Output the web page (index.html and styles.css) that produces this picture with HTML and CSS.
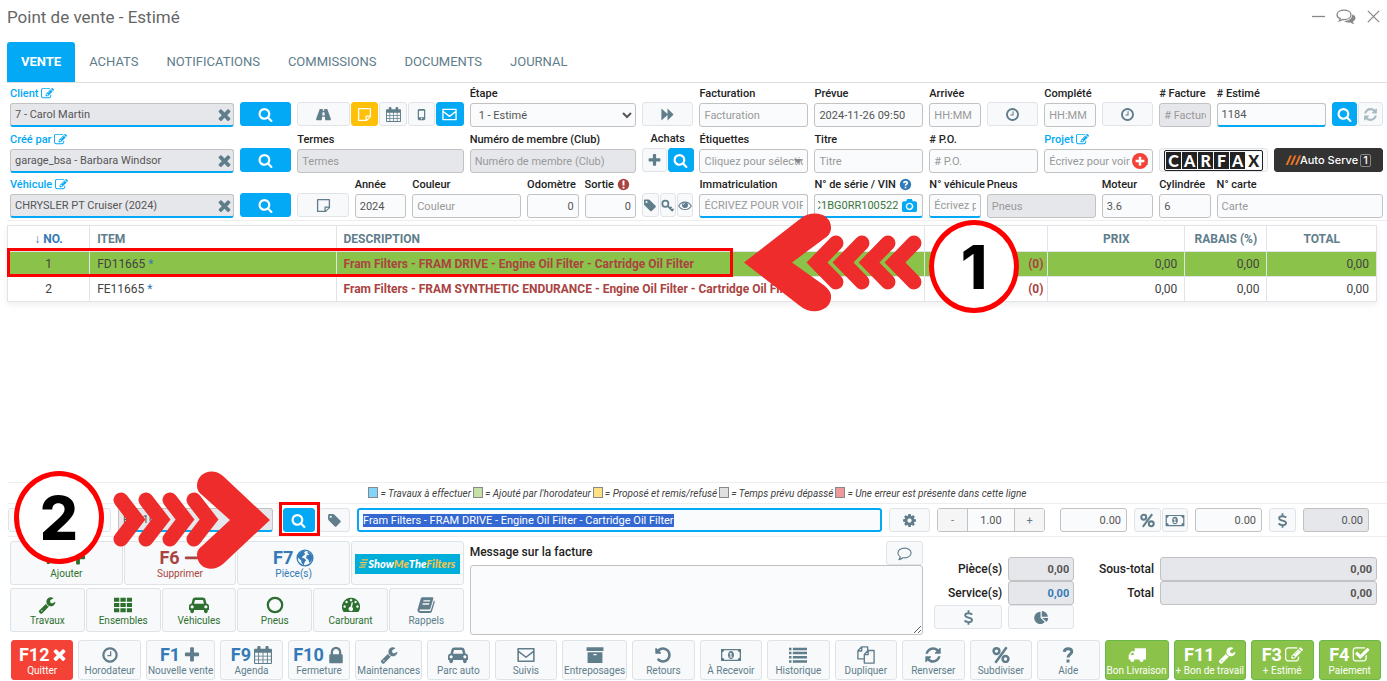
FILE: index.html
```html
<!DOCTYPE html>
<html lang="fr">
<head>
  <meta charset="UTF-8" />
  <meta name="viewport" content="width=device-width, initial-scale=1.0"/>
  <title>Point de vente - Estimé</title>
  <link rel="stylesheet" href="styles.css">
</head>
<body>
  <!-- Icon sprite -->
  <svg class="sprite" aria-hidden="true">
    <symbol id="search" viewBox="0 0 1792 1792"><path d="M1216 832q0-185-131.500-316.500t-316.500-131.500-316.500 131.500-131.500 316.500 131.500 316.500 316.500 131.500 316.500-131.500 131.500-316.500zm512 832q0 52-38 90t-90 38q-54 0-90-38l-343-342q-179 124-399 124-143 0-273.500-55.500t-225-150-150-225-55.500-273.500 55.500-273.500 150-225 225-150 273.500-55.500 273.500 55.500 225 150 150 225 55.500 273.500q0 220-124 399l343 343q37 37 37 90z"/></symbol>
    <symbol id="times" viewBox="240 240 1312 1312"><path d="M1490 1322q0 40-28 68l-136 136q-28 28-68 28t-68-28l-294-294-294 294q-28 28-68 28t-68-28l-136-136q-28-28-28-68t28-68l294-294-294-294q-28-28-28-68t28-68l136-136q28-28 68-28t68 28l294 294 294-294q28-28 68-28t68 28l136 136q28 28 28 68t-28 68l-294 294 294 294q28 28 28 68z"/></symbol>
    <symbol id="plus" viewBox="0 0 1792 1792"><path d="M1600 736v192q0 40-28 68t-68 28h-416v416q0 40-28 68t-68 28h-192q-40 0-68-28t-28-68v-416h-416q-40 0-68-28t-28-68v-192q0-40 28-68t68-28h416v-416q0-40 28-68t68-28h192q40 0 68 28t28 68v416h416q40 0 68 28t28 68z"/></symbol>
    <symbol id="minus" viewBox="0 0 1792 1792"><rect x="192" y="736" width="1408" height="288" rx="96"/></symbol>
    <symbol id="clock" viewBox="0 0 1792 1792"><path d="M1024 544v448q0 14-9 23t-23 9h-320q-14 0-23-9t-9-23v-64q0-14 9-23t23-9h224v-352q0-14 9-23t23-9h64q14 0 23 9t9 23zm416 352q0-148-73-273t-198-198-273-73-273 73-198 198-73 273 73 273 198 198 273 73 273-73 198-198 73-273zm224 0q0 209-103 385.500t-279.500 279.500-385.500 103-385.500-103-279.500-279.500-103-385.500 103-385.500 279.500-279.500 385.500-103 385.500 103 279.500 279.500 103 385.500z"/></symbol>
    <symbol id="wrench" viewBox="0 0 1792 1792"><path d="M448 1472q0-26-19-45t-45-19-45 19-19 45 19 45 45 19 45-19 19-45zm644-420l-682 682q-37 37-90 37-52 0-91-37l-106-108q-38-36-38-90 0-53 38-91l681-681q39 98 114.500 173.500t173.500 114.500zm634-435q0 39-23 106-47 134-164.500 217.500t-258.500 83.500q-185 0-316.500-131.500t-131.500-316.500 131.500-316.500 316.500-131.500q58 0 121.500 16.500t107.500 46.500q16 11 16 28t-16 28l-293 169v224l193 107q5-3 79-48.500t135.500-81 70.500-35.500q15 0 23.500 10t8.500 25z"/></symbol>
    <symbol id="car" viewBox="0 0 2048 1792"><path d="M480 1088q0-66-47-113t-113-47-113 47-47 113 47 113 113 47 113-47 47-113zm36-320h1016l-89-357q-2-8-14-17.500t-21-9.500h-768q-9 0-21 9.500t-14 17.500zm1372 320q0-66-47-113t-113-47-113 47-47 113 47 113 113 47 113-47 47-113zm160-96v384q0 14-9 23t-23 9h-96v128q0 80-56 136t-136 56-136-56-56-136v-128h-1024v128q0 80-56 136t-136 56-136-56-56-136v-128h-96q-14 0-23-9t-9-23v-384q0-93 65.500-158.500t158.500-65.500h28l105-419q23-94 104-157.500t179-63.500h768q98 0 179 63.500t104 157.500l105 419h28q93 0 158.500 65.500t65.500 158.500z"/></symbol>
    <symbol id="tag" viewBox="0 0 1792 1792"><path d="M576 448q0-53-37.500-90.500t-90.500-37.500-90.500 37.500-37.500 90.500 37.500 90.500 90.500 37.500 90.500-37.500 37.500-90.500zm1067 576q0 53-37 90l-491 492q-39 37-91 37-53 0-90-37l-715-716q-38-37-64.500-101t-26.500-117v-416q0-52 38-90t90-38h416q53 0 117 26.500t102 64.500l715 714q37 39 37 91z"/></symbol>
    <symbol id="lock" viewBox="128 64 1536 1536"><path d="M640 768h512v-192q0-106-75-181t-181-75-181 75-75 181v192zm832 96v576q0 40-28 68t-68 28h-960q-40 0-68-28t-28-68v-576q0-40 28-68t68-28h32v-192q0-184 132-316t316-132 316 132 132 316v192h32q40 0 68 28t28 68z"/></symbol>
    <symbol id="refresh" viewBox="0 0 1792 1792"><path d="M1639 1056q0 5-1 7-64 268-268 434.500t-478 166.500q-146 0-282.500-55t-243.500-157l-129 129q-19 19-45 19t-45-19-19-45v-448q0-26 19-45t45-19h448q26 0 45 19t19 45-19 45l-137 137q71 66 161 102t187 36q134 0 250-65t186-179q11-17 53-117 8-23 30-23h192q13 0 22.500 9.500t9.500 22.500zm25-800v448q0 26-19 45t-45 19h-448q-26 0-45-19t-19-45 19-45l138-138q-148-137-349-137-134 0-250 65t-186 179q-11 17-53 117-8 23-30 23h-199q-13 0-22.500-9.500t-9.500-22.500v-7q65-268 270-434.500t480-166.500q146 0 284 55.500t245 156.500l130-129q19-19 45-19t45 19 19 45z"/></symbol>
    <symbol id="undo" viewBox="0 0 1792 1792"><path d="M1664 896q0 156-61 298t-164 245-245 164-298 61q-172 0-327-72.500t-264-204.500q-7-10-6.500-22.500t8.500-20.500l137-138q10-9 25-9 16 2 23 12 73 95 179 147t225 52q104 0 198.500-40.500t163.500-109.500 109.500-163.500 40.500-198.500-40.500-198.500-109.500-163.500-163.500-109.500-198.500-40.500q-98 0-188 35.500t-160 101.500l137 138q31 30 14 69-17 40-59 40h-448q-26 0-45-19t-19-45v-448q0-42 40-59 39-17 69 14l130 129q107-101 244.500-156.500t284.500-55.500q156 0 298 61t245 164 164 245 61 298z"/></symbol>
    <symbol id="edit" viewBox="0 0 1792 1792"><path d="M888 1184l116-116-152-152-116 116v56h96v96h56zm440-720q-16-16-33 1l-350 350q-17 17-1 33t33-1l350-350q17-17 1-33zm80 594v190q0 119-84.500 203.500t-203.500 84.500h-832q-119 0-203.500-84.500t-84.500-203.500v-832q0-119 84.500-203.500t203.500-84.500h832q63 0 117 25 15 7 18 23 3 17-9 29l-49 49q-14 14-32 8-23-6-45-6h-832q-66 0-113 47t-47 113v832q0 66 47 113t113 47h832q66 0 113-47t47-113v-126q0-13 9-22l64-64q15-15 35-7t20 29zm-96-738l288 288-672 672h-288v-288zm444 132l-92 92-288-288 92-92q28-28 68-28t68 28l152 152q28 28 28 68t-28 68z"/></symbol>
    <symbol id="check" viewBox="0 0 1792 1792"><path d="M1472 930v318q0 119-84.500 203.500t-203.500 84.500h-832q-119 0-203.500-84.500t-84.500-203.500v-832q0-119 84.500-203.500t203.500-84.500h832q63 0 117 25 15 7 18 23 3 17-9 29l-49 49q-10 10-23 10-3 0-9-2-23-6-45-6h-832q-66 0-113 47t-47 113v832q0 66 47 113t113 47h832q66 0 113-47t47-113v-254q0-13 9-22l64-64q10-10 23-10 6 0 12 3 20 8 20 29zm231-489l-814 814q-24 24-57 24t-57-24l-430-430q-24-24-24-57t24-57l110-110q24-24 57-24t57 24l263 263 647-647q24-24 57-24t57 24l110 110q24 24 24 57t-24 57z"/></symbol>
    <symbol id="cog" viewBox="0 0 1792 1792"><path d="M1152 896q0-106-75-181t-181-75-181 75-75 181 75 181 181 75 181-75 75-181zm512-109v222q0 12-8 23t-20 13l-185 28q-19 54-39 91 35 50 107 138 10 12 10 25t-9 23q-27 37-99 108t-94 71q-12 0-26-9l-138-108q-44 23-91 38-16 136-29 186-7 28-36 28h-222q-14 0-24.500-8.500t-11.500-21.500l-28-184q-49-16-90-37l-141 107q-10 9-25 9-14 0-25-11-126-114-165-168-7-10-7-23 0-12 8-23 15-21 51-66.500t54-70.500q-27-50-41-99l-183-27q-13-2-21-12.500t-8-23.500v-222q0-12 8-23t19-13l186-28q14-46 39-92-40-57-107-138-10-12-10-24 0-10 9-23 26-36 98.500-107.500t94.500-71.500q13 0 26 10l138 107q44-23 91-38 16-136 29-186 7-28 36-28h222q14 0 24.500 8.500t11.500 21.500l28 184q49 16 90 37l142-107q9-9 24-9 13 0 25 10 129 119 165 170 7 8 7 22 0 12-8 23-15 21-51 66.500t-54 70.500q26 50 41 98l183 28q13 2 21 12.500t8 23.500z"/></symbol>
    <symbol id="road" viewBox="0 0 16 16"><path fill-rule="evenodd" d="M4 2h3.300l-.2 2h1.800l-.2-2H12l3.800 10.500c.2.800 0 1.500-.6 1.500H9.800l-.3-3.500h-3L6.200 14H.8c-.6 0-.8-.7-.6-1.500zM7 5.500L6.700 9h2.600L9 5.500z"/></symbol>
    <symbol id="note" viewBox="0 0 16 16"><path fill-rule="evenodd" d="M2 1h12a1 1 0 0 1 1 1v8.500L10.500 15H2a1 1 0 0 1-1-1V2a1 1 0 0 1 1-1zm.4 1.400v11.200H9V10a1 1 0 0 1 1-1h3.600V2.400zm8 8v3l3-3z"/></symbol>
    <symbol id="calendar" viewBox="0 0 16 16"><path fill-rule="evenodd" d="M1 2.500h2V1a1 1 0 0 1 1-1h.8a1 1 0 0 1 1 1v1.500h4.400V1a1 1 0 0 1 1-1h.8a1 1 0 0 1 1 1v1.500h2a1 1 0 0 1 1 1V15a1 1 0 0 1-1 1H1a1 1 0 0 1-1-1V3.500a1 1 0 0 1 1-1zM1 6v2.600h2.700V6zm3.500 0v2.600h3.100V6zm3.900 0v2.600h3.100V6zm3.900 0v2.600H15V6zM1 9.300V12h2.700V9.300zm3.500 0V12h3.100V9.300zm3.900 0V12h3.100V9.300zm3.900 0V12H15V9.300zM1 12.700V15h2.700v-2.300zm3.500 0V15h3.100v-2.300zm3.900 0V15h3.100v-2.300zm3.900 0V15H15v-2.300z"/></symbol>
    <symbol id="mobile" viewBox="0 0 16 16"><path fill-rule="evenodd" d="M5.500 2h5A1.500 1.500 0 0 1 12 3.500v9a1.500 1.500 0 0 1-1.500 1.500h-5A1.500 1.500 0 0 1 4 12.500v-9A1.500 1.500 0 0 1 5.500 2zm-.2 2v7h5.400V4zM8 11.800a.7.700 0 1 0 .1 0z"/></symbol>
    <symbol id="mail" viewBox="0 0 16 16"><path fill="none" stroke="currentColor" stroke-width="1.400" stroke-linejoin="round" d="M1 2.500h14v11H1zM1 4.500L8 10l7-5.500"/></symbol>
    <symbol id="forward" viewBox="0 0 16 16"><path d="M1.500 1.500L8 7.500v-6L14.500 8 8 14.500v-6l-6.500 6z"/></symbol>
    <symbol id="key" viewBox="0 0 16 16"><g fill="none" stroke="currentColor" stroke-width="2"><circle cx="5" cy="6" r="3.500"/><path d="M7.500 8.500l6 6M10 11.500l2-2M12.300 13.800l2-2"/></g></symbol>
    <symbol id="eye" viewBox="0 0 16 16"><path fill="none" stroke="currentColor" stroke-width="1.200" d="M.8 8.500C4.500 2.500 11.500 2.500 15.200 8.500 11.500 14 4.500 14 .8 8.500z"/><circle cx="8" cy="7.500" r="3.400"/><path fill="none" stroke="#fff" stroke-width=".8" d="M6 7.400a2 2 0 0 1 2-2"/></symbol>
    <symbol id="camera" viewBox="0 0 16 16"><path fill-rule="evenodd" d="M2 3.500h2.500L5.500 1h5l1 2.500H14a2 2 0 0 1 2 2V13a2 2 0 0 1-2 2H2a2 2 0 0 1-2-2V5.500a2 2 0 0 1 2-2zM8 5a4 4 0 1 0 .1 0zm0 1.500a2.500 2.500 0 1 1-.1 0z"/></symbol>
    <symbol id="grid" viewBox="0 0 16 16"><path d="M0 1.500h4.700v3.600H0zm5.700 0h4.700v3.600H5.700zm5.700 0H16v3.600h-4.600zM0 6.200h4.700v3.600H0zm5.700 0h4.700v3.600H5.700zm5.700 0H16v3.600h-4.600zM0 10.900h4.700v3.600H0zm5.700 0h4.700v3.600H5.700zm5.700 0H16v3.600h-4.600z"/></symbol>
    <symbol id="ring" viewBox="0 0 16 16"><circle cx="8" cy="8" r="6.400" fill="none" stroke="currentColor" stroke-width="2"/></symbol>
    <symbol id="globe" viewBox="0 0 16 16"><circle cx="8" cy="8" r="7" fill="none" stroke="currentColor" stroke-width="1.200"/><path d="M3 3.500L6 1.500 8.500 2 7 3.500l1.500 1L6.500 6 5 7.500l2.500 1L9 10l-1.500 2-.5 2.500L5 12.500 4.500 10 2 8 1.500 6zM10 2l3 2 1.800 3-1 3.500-1.800 2-1-3-2-1.500.5-2.500L12 5l-1.500-1z"/></symbol>
    <symbol id="gauge" viewBox="0 0 16 16"><path fill-rule="evenodd" d="M8 1.500a8 8 0 0 1 6.700 12.400.8.800 0 0 1-.7.400H2a.8.800 0 0 1-.7-.4A8 8 0 0 1 8 1.500zM8 2.600a1.100 1.100 0 1 0 .1 0zM4 4.200a1.100 1.100 0 1 0 .1 0zM2.300 8.300a1.100 1.100 0 1 0 .1 0zM12 4.200a1.100 1.100 0 1 0 .1 0zM13.700 8.300a1.100 1.100 0 1 0 .1 0zM8.600 5.500l-1 4a2 2 0 1 0 1.300.3l.9-4z"/></symbol>
    <symbol id="book" viewBox="0 0 16 16"><path fill-rule="evenodd" d="M5 1h8.500c.8 0 1.200.6 1 1.300L12 10.800c-.2.700-.8 1.200-1.500 1.200H2.800c-.8 0-.8 1.300.2 1.300h8.300c.5 0 .9-.3 1-.7L15 4c.7.300.9.900.7 1.600l-2.400 7.900c-.2.800-1 1.500-1.900 1.500H2.800C1.200 15 0 13.500.5 12L3.300 2.500C3.500 1.600 4.100 1 5 1zm.9 2.700L5.600 4.900h5.900l.3-1.200zM5.100 6.500l-.3 1.200h5.900l.3-1.200z"/></symbol>
    <symbol id="money" viewBox="0 0 20 16"><path fill-rule="evenodd" d="M0 2h20v12H0zm3.200 1.300c0 1-.9 1.900-1.900 1.900v5.600c1 0 1.900.9 1.900 1.900h13.600c0-1 .9-1.900 1.900-1.900V5.200c-1 0-1.900-.9-1.900-1.900z"/><path fill-rule="evenodd" d="M10 4c2 0 3 1.800 3 4s-1 4-3 4-3-1.800-3-4 1-4 3-4zm-.3 1.700L8.300 6.900l.6.700.5-.4v2.500h-.9v.9h2.900v-.9h-.9v-4z"/></symbol>
    <symbol id="list" viewBox="0 0 16 16"><path d="M0 1.500h2.200v2.200H0zm3.400 0H16v2.200H3.400zM0 5.200h2.200v2.200H0zm3.400 0H16v2.200H3.400zM0 8.900h2.200v2.200H0zm3.400 0H16v2.200H3.400zM0 12.600h2.200v2.200H0zm3.400 0H16v2.200H3.400z"/></symbol>
    <symbol id="archive" viewBox="0 0 16 16"><path fill-rule="evenodd" d="M.5 1h15v3.500H.5zm.9 4.500h13.200V15H1.400zM6.500 7v1.300h3V7z"/></symbol>
    <symbol id="copy" viewBox="0 0 16 16"><g fill="none" stroke="currentColor" stroke-width="1.200" stroke-linejoin="round"><path d="M6.500 11.500H.8V4.200L4 .8h5.500v3M4.200.8v3.600H.8"/><path d="M6.500 7.500L9.700 4h5.500v11.200H6.500zM9.900 4v3.600H6.500"/></g></symbol>
    <symbol id="truck" viewBox="0 0 16 16"><path d="M6 2h9.500c.3 0 .5.200.5.500V12H6z"/><path fill-rule="evenodd" d="M.6 12V8L3 4.700h3.200V12zM2 8h3V6H3.500z"/><circle cx="3.800" cy="12.500" r="1.800"/><circle cx="12" cy="12.500" r="1.800"/></symbol>
    <symbol id="comment" viewBox="0 0 16 16"><path fill="none" stroke="currentColor" stroke-width="1.200" stroke-linejoin="round" d="M8 2.200c4 0 7 2.300 7 5.200s-3 5.200-7 5.200l-1.700-.1C5 13.700 3.500 14.200 2 14.500c.9-.9 1.300-1.700 1.500-2.900C2 10.600 1 9.100 1 7.400c0-2.900 3-5.200 7-5.200z"/></symbol>
    <symbol id="comments" viewBox="0 0 20 16"><path fill="none" stroke="currentColor" stroke-width="1.300" d="M8 1.200c4 0 7 2 7 4.700s-3 4.700-7 4.700l-1.500-.1c-1 .8-2 1.200-3.300 1.400.8-.8 1-1.400 1-2.200C2.300 8.800 1 7.500 1 5.900c0-2.700 3-4.700 7-4.700z"/><path d="M16.300 5.200c2 .8 3.200 2.200 3.200 3.800s-1 2.700-2.500 3.500c0 1 .4 1.700 1.300 2.500-1.600-.2-2.800-.7-3.800-1.600-2.600.3-5-.3-6.300-1.500 4.700 0 8.400-2.700 8.100-6.700z"/></symbol>
    <symbol id="pie" viewBox="0 0 16 16"><path d="M7 2v6.300l4.500 4.600A6.500 6.500 0 1 1 7 2zM8.300 1a6.500 6.500 0 0 1 6.500 6.300H8.300zM9 8.600h6.200a6.500 6.500 0 0 1-1.900 4.300z"/></symbol>
    <symbol id="dollar" viewBox="0 0 16 16"><path fill="none" stroke="currentColor" stroke-width="2" d="M12 4.800C11 3.900 9.700 3.400 8 3.400c-2.200 0-3.600.8-3.600 2.200 0 3.400 7.400 1.500 7.400 5 0 1.500-1.500 2.300-3.700 2.300-1.800 0-3.200-.6-4.300-1.700M8 .3v3M8 12.900v2.900"/></symbol>
    <symbol id="percent" viewBox="0 0 16 16"><g fill="none" stroke="currentColor" stroke-width="2.200"><circle cx="4" cy="4.500" r="2.600"/><circle cx="12" cy="11.500" r="2.600"/><path d="M13 1.200L3 14.800"/></g></symbol>
    <symbol id="question" viewBox="0 0 16 16"><path fill="none" stroke="currentColor" stroke-width="2.700" d="M4.500 5.200C5 3.500 6.300 2.500 8 2.500c2 0 3.300 1.100 3.300 2.600C11.300 7.500 8 7.500 8 10.300M8 12v2.700"/></symbol>
    <symbol id="help" viewBox="0 0 16 16"><circle cx="8" cy="8" r="7"/><path fill="none" stroke="#fff" stroke-width="2" d="M5.700 6.300c.3-1.300 1.200-1.900 2.300-1.900 1.300 0 2.200.7 2.200 1.700C10.200 7.600 8 7.600 8 9.500M8 10.700v1.900"/></symbol>
    <symbol id="alert" viewBox="0 0 16 16"><circle cx="8" cy="8" r="7"/><path fill="none" stroke="#fff" stroke-width="2.400" d="M8 3v6.300M8 10.700V13"/></symbol>
  </svg>

  <div class="pos-window">
    <header class="title-bar">
      <h1>Point de vente - Estimé</h1>
      <div class="window-buttons">
        <button aria-label="Réduire"><svg class="icon" viewBox="0 0 16 16"><path class="thin" d="M1 8h14"/></svg></button>
        <button aria-label="Clavardage"><svg class="icon chat"><use href="#comments"/></svg></button>
        <button aria-label="Fermer"><svg class="icon" viewBox="0 0 16 16"><path class="thin" d="M2 2l12 12M14 2L2 14"/></svg></button>
      </div>
    </header>

    <nav class="tabs">
      <a href="#" class="active">VENTE</a>
      <a href="#">ACHATS</a>
      <a href="#">NOTIFICATIONS</a>
      <a href="#">COMMISSIONS</a>
      <a href="#">DOCUMENTS</a>
      <a href="#">JOURNAL</a>
    </nav>

    <main>
      <form class="form-grid">
        <!-- Client -->
        <div class="field span4">
          <label class="link-label" for="client">Client <svg class="icon small"><use href="#edit"/></svg></label>
          <div class="wrap"><input id="client" class="locked under" value="7 - Carol Martin" readonly><button type="button" class="clear" aria-label="Effacer"><svg class="icon"><use href="#times"/></svg></button></div>
        </div>
        <button type="button" class="btn blue" aria-label="Chercher client"><svg class="icon"><use href="#search"/></svg></button>
        <div class="group span3">
          <button type="button" class="btn wide" aria-label="Route"><svg class="icon"><use href="#road"/></svg></button>
          <button type="button" class="btn yellow" aria-label="Note"><svg class="icon"><use href="#note"/></svg></button>
          <button type="button" class="btn" aria-label="Calendrier"><svg class="icon"><use href="#calendar"/></svg></button>
          <button type="button" class="btn" aria-label="Mobile"><svg class="icon"><use href="#mobile"/></svg></button>
          <button type="button" class="btn blue" aria-label="Courriel"><svg class="icon"><use href="#mail"/></svg></button>
        </div>
        <div class="field span3">
          <label for="etape">Étape</label>
          <select id="etape"><option>1 - Estimé</option></select>
        </div>
        <button type="button" class="btn" aria-label="Étape suivante"><svg class="icon"><use href="#forward"/></svg></button>
        <div class="field span2"><label for="facturation">Facturation</label><input id="facturation" placeholder="Facturation"></div>
        <div class="field span2"><label for="prevue">Prévue</label><input id="prevue" value="2024-11-26 09:50"></div>
        <div class="field"><label for="arrivee">Arrivée</label><input id="arrivee" placeholder="HH:MM"></div>
        <button type="button" class="btn" aria-label="Heure d'arrivée"><svg class="icon"><use href="#clock"/></svg></button>
        <div class="field"><label for="complete">Complété</label><input id="complete" placeholder="HH:MM"></div>
        <button type="button" class="btn" aria-label="Heure complété"><svg class="icon"><use href="#clock"/></svg></button>
        <div class="field"><label for="facture"># Facture</label><input id="facture" class="locked" placeholder="# Facture" readonly></div>
        <div class="field span2"><label for="estime"># Estimé</label><input id="estime" class="under" value="1184"></div>
        <div class="group">
          <button type="button" class="btn blue" aria-label="Chercher estimé"><svg class="icon"><use href="#search"/></svg></button>
          <button type="button" class="btn faded" aria-label="Rafraîchir"><svg class="icon"><use href="#refresh"/></svg></button>
        </div>

        <!-- Créé par -->
        <div class="field span4">
          <label class="link-label" for="cree">Créé par <svg class="icon small"><use href="#edit"/></svg></label>
          <div class="wrap"><input id="cree" class="locked under" value="garage_bsa - Barbara Windsor" readonly><button type="button" class="clear" aria-label="Effacer"><svg class="icon"><use href="#times"/></svg></button></div>
        </div>
        <button type="button" class="btn blue" aria-label="Chercher employé"><svg class="icon"><use href="#search"/></svg></button>
        <div class="field span3"><label for="termes">Termes</label><input id="termes" class="locked" placeholder="Termes" readonly></div>
        <div class="field span3"><label for="membre">Numéro de membre (Club)</label><input id="membre" class="locked" placeholder="Numéro de membre (Club)" readonly></div>
        <div class="field">
          <span class="label center">Achats</span>
          <div class="group">
            <button type="button" class="btn" aria-label="Ajouter achat"><svg class="icon"><use href="#plus"/></svg></button>
            <button type="button" class="btn blue" aria-label="Chercher achat"><svg class="icon"><use href="#search"/></svg></button>
          </div>
        </div>
        <div class="field span2"><label for="etiquettes">Étiquettes</label><div class="wrap"><input id="etiquettes" class="combo" placeholder="Cliquez pour sélectionner"><span class="caret"></span></div></div>
        <div class="field span2"><label for="titre">Titre</label><input id="titre" placeholder="Titre"></div>
        <div class="field span2"><label for="po"># P.O.</label><input id="po" placeholder="# P.O."></div>
        <div class="field span2">
          <label class="link-label" for="projet">Projet <svg class="icon small"><use href="#edit"/></svg></label>
          <div class="wrap"><input id="projet" placeholder="Écrivez pour voir des choix"><button type="button" class="add-badge" aria-label="Ajouter projet"><svg class="icon" viewBox="0 0 16 16"><path d="M6 1h4v5h5v4h-5v5H6v-5H1V6h5z"/></svg></button></div>
        </div>
        <button type="button" class="btn carfax span2" aria-label="CARFAX"><span class="carfax-logo"><b>C</b><b>A</b><b>R</b><b>F</b><b>A</b><b class="last">X</b></span></button>
        <button type="button" class="btn autoserve span2"><span class="slashes">///</span>Auto Serve<span class="one">1</span></button>

        <!-- Véhicule -->
        <div class="field span4">
          <label class="link-label" for="vehicule">Véhicule <svg class="icon small"><use href="#edit"/></svg></label>
          <div class="wrap"><input id="vehicule" class="locked under" value="CHRYSLER PT Cruiser (2024)" readonly><button type="button" class="clear" aria-label="Effacer"><svg class="icon"><use href="#times"/></svg></button></div>
        </div>
        <button type="button" class="btn blue" aria-label="Chercher véhicule"><svg class="icon"><use href="#search"/></svg></button>
        <button type="button" class="btn" aria-label="Note du véhicule"><svg class="icon"><use href="#note"/></svg></button>
        <div class="field"><label for="annee">Année</label><input id="annee" value="2024"></div>
        <div class="field span2"><label for="couleur">Couleur</label><input id="couleur" placeholder="Couleur"></div>
        <div class="field"><label for="odometre">Odomètre</label><input id="odometre" class="right" value="0"></div>
        <div class="field"><label for="sortie">Sortie <svg class="icon small red"><use href="#alert"/></svg></label><input id="sortie" class="right" value="0"></div>
        <div class="group tight">
          <button type="button" class="btn" aria-label="Étiquette"><svg class="icon"><use href="#tag"/></svg></button>
          <button type="button" class="btn" aria-label="Clé"><svg class="icon"><use href="#key"/></svg></button>
          <button type="button" class="btn" aria-label="Voir"><svg class="icon"><use href="#eye"/></svg></button>
        </div>
        <div class="field span2"><label for="immat">Immatriculation</label><input id="immat" class="under" placeholder="ÉCRIVEZ POUR VOIR DES CHOIX"></div>
        <div class="field span2">
          <label for="vin">N° de série / VIN <svg class="icon small navy"><use href="#help"/></svg></label>
          <div class="wrap vin under"><input id="vin" value="2C3CDXRC1BG0RR100522"><button type="button" class="camera" aria-label="Photo"><svg class="icon"><use href="#camera"/></svg></button></div>
        </div>
        <div class="field"><label for="noveh">N° véhicule</label><input id="noveh" class="under" placeholder="Écrivez pour voir"></div>
        <div class="field span2"><label for="pneus">Pneus</label><input id="pneus" class="locked" placeholder="Pneus" readonly></div>
        <div class="field"><label for="moteur">Moteur</label><input id="moteur" value="3.6"></div>
        <div class="field"><label for="cyl">Cylindrée</label><input id="cyl" value="6"></div>
        <div class="field span3"><label for="carte">N° carte</label><input id="carte" placeholder="Carte"></div>
      </form>

      <section class="items">
        <table>
          <colgroup><col class="c-no"><col class="c-item"><col class="c-desc"><col class="c-qty"><col class="c-price"><col class="c-disc"><col class="c-total"></colgroup>
          <thead>
            <tr><th class="center sorted"><span class="sort">↓</span> NO.</th><th>ITEM</th><th>DESCRIPTION</th><th class="center">QTÉ</th><th class="center">PRIX</th><th class="center">RABAIS (%)</th><th class="center">TOTAL</th></tr>
          </thead>
          <tbody>
            <tr class="selected"><td class="center">1</td><td>FD11665 <span class="star">*</span></td><td class="warn">Fram Filters - FRAM DRIVE - Engine Oil Filter - Cartridge Oil Filter</td><td class="warn qty">(0)</td><td class="num">0,00</td><td class="num">0,00</td><td class="num">0,00</td></tr>
            <tr><td class="center">2</td><td>FE11665 <span class="star">*</span></td><td class="warn">Fram Filters - FRAM SYNTHETIC ENDURANCE - Engine Oil Filter - Cartridge Oil Filter</td><td class="warn qty">(0)</td><td class="num">0,00</td><td class="num">0,00</td><td class="num">0,00</td></tr>
          </tbody>
        </table>
      </section>

      <div class="legend">
        <span><i class="sw sky"></i>= Travaux à effectuer</span>
        <span><i class="sw lime"></i>= Ajouté par l'horodateur</span>
        <span><i class="sw gold"></i>= Proposé et remis/refusé</span>
        <span><i class="sw grey"></i>= Temps prévu dépassé</span>
        <span><i class="sw rose"></i>= Une erreur est présente dans cette ligne</span>
      </div>

      <div class="edit-row">
        <button class="btn" aria-label="Type"></button>
        <input class="locked under" aria-label="Item" value="FD11665" readonly>
        <div class="group lookup">
          <button class="btn blue" aria-label="Chercher item"><svg class="icon"><use href="#search"/></svg></button>
          <button class="btn" aria-label="Étiquette"><svg class="icon"><use href="#tag"/></svg></button>
        </div>
        <input id="description" class="focused" aria-label="Description" value="Fram Filters - FRAM DRIVE - Engine Oil Filter - Cartridge Oil Filter">
        <button class="btn" aria-label="Options"><svg class="icon"><use href="#cog"/></svg></button>
        <div class="stepper"><button>-</button><input aria-label="Quantité" value="1.00"><button>+</button></div>
        <input class="right" aria-label="Prix" value="0.00">
        <div class="group">
          <button class="btn" aria-label="Pourcentage"><svg class="icon"><use href="#percent"/></svg></button>
          <button class="btn" aria-label="Montant"><svg class="icon bill"><use href="#money"/></svg></button>
        </div>
        <input class="right" aria-label="Rabais" value="0.00">
        <button class="btn" aria-label="Dollar"><svg class="icon"><use href="#dollar"/></svg></button>
        <input class="right locked" aria-label="Total de ligne" value="0.00" readonly>
      </div>

      <section class="bottom">
        <div class="tools">
          <div class="tool-row">
            <button class="tool green"><span class="key">F5 <svg class="icon"><use href="#plus"/></svg></span>Ajouter</button>
            <button class="tool maroon"><span class="key">F6 <svg class="icon"><use href="#minus"/></svg></span>Supprimer</button>
            <button class="tool navy"><span class="key">F7 <svg class="icon"><use href="#globe"/></svg></span>Pièce(s)</button>
            <button class="tool filters"><span class="filters-logo"><svg class="speed" viewBox="0 0 10 10"><path d="M3 1h7M1 4h8M2 6.500h6M0 9h7"/></svg>Show<em>Me</em>The<em>Filters</em></span></button>
          </div>
          <div class="tool-row">
            <button class="tool green"><svg class="icon"><use href="#wrench"/></svg>Travaux</button>
            <button class="tool green"><svg class="icon"><use href="#grid"/></svg>Ensembles</button>
            <button class="tool green"><svg class="icon car"><use href="#car"/></svg>Véhicules</button>
            <button class="tool green"><svg class="icon"><use href="#ring"/></svg>Pneus</button>
            <button class="tool green"><svg class="icon"><use href="#gauge"/></svg>Carburant</button>
            <button class="tool"><svg class="icon"><use href="#book"/></svg>Rappels</button>
          </div>
        </div>

        <div class="message">
          <div class="message-head">
            <label for="message">Message sur la facture</label>
            <button class="btn" aria-label="Commentaire"><svg class="icon"><use href="#comment"/></svg></button>
          </div>
          <textarea id="message"></textarea>
        </div>

        <div class="totals">
          <label for="pieces">Pièce(s)</label><input id="pieces" class="locked" value="0,00" readonly>
          <label for="soustotal">Sous-total</label><input id="soustotal" class="locked" value="0,00" readonly>
          <label for="services">Service(s)</label><input id="services" class="locked navy" value="0,00" readonly>
          <label for="total">Total</label><input id="total" class="locked" value="0,00" readonly>
          <button class="btn" aria-label="Prix"><svg class="icon"><use href="#dollar"/></svg></button>
          <button class="btn" aria-label="Profit"><svg class="icon"><use href="#pie"/></svg></button>
        </div>
      </section>
    </main>

    <footer class="actions">
      <button class="action danger"><span class="key">F12 <svg class="icon cross"><use href="#times"/></svg></span>Quitter</button>
      <button class="action"><svg class="icon"><use href="#clock"/></svg>Horodateur</button>
      <button class="action"><span class="key">F1 <svg class="icon"><use href="#plus"/></svg></span>Nouvelle vente</button>
      <button class="action"><span class="key">F9 <svg class="icon"><use href="#calendar"/></svg></span>Agenda</button>
      <button class="action"><span class="key">F10 <svg class="icon lock"><use href="#lock"/></svg></span>Fermeture</button>
      <button class="action"><svg class="icon"><use href="#wrench"/></svg>Maintenances</button>
      <button class="action"><svg class="icon car"><use href="#car"/></svg>Parc auto</button>
      <button class="action"><svg class="icon"><use href="#mail"/></svg>Suivis</button>
      <button class="action"><svg class="icon"><use href="#archive"/></svg>Entreposages</button>
      <button class="action"><svg class="icon"><use href="#undo"/></svg>Retours</button>
      <button class="action"><svg class="icon bill"><use href="#money"/></svg>À Recevoir</button>
      <button class="action"><svg class="icon"><use href="#list"/></svg>Historique</button>
      <button class="action"><svg class="icon"><use href="#copy"/></svg>Dupliquer</button>
      <button class="action"><svg class="icon"><use href="#refresh"/></svg>Renverser</button>
      <button class="action"><svg class="icon"><use href="#percent"/></svg>Subdiviser</button>
      <button class="action"><svg class="icon"><use href="#question"/></svg>Aide</button>
      <button class="action success"><svg class="icon"><use href="#truck"/></svg>Bon Livraison</button>
      <button class="action success"><span class="key">F11 <svg class="icon"><use href="#wrench"/></svg></span>+ Bon de travail</button>
      <button class="action success"><span class="key">F3 <svg class="icon"><use href="#edit"/></svg></span>+ Estimé</button>
      <button class="action success"><span class="key">F4 <svg class="icon"><use href="#check"/></svg></span>Paiement</button>
    </footer>
  </div>

  <!-- Step markers drawn over the window -->
  <div class="frame row-frame"></div>
  <svg class="arrow arrow-1" viewBox="744 212 180 102" aria-hidden="true">
    <g class="chevrons">
      <path d="M836 243l-19 19.500 19 19.500M862 243l-19 19.500 19 19.500M888 243l-19 19.500 19 19.500M914 243l-19 19.500 19 19.500"/>
    </g>
    <path d="M744 262.500L800 219C812 209 832 213 831 229 830 234 828 236 825 238L792 262.500 825 286C828 289 831 292 831 296 832 311 812 316 800 306z"/>
  </svg>
  <div class="step step-1">1</div>
  <div class="frame button-frame"></div>
  <svg class="arrow arrow-2" viewBox="110 469 164 102" aria-hidden="true">
    <g class="chevrons">
      <path d="M121 500l15 19.500-15 19.500M146 500l15 19.500-15 19.500M170 500l15 19.500-15 19.500M194 500l15 19.500-15 19.500"/>
    </g>
    <path d="M270 520L223 476C213 467 197 472 197 486 197 490 199 493 202 495L230 520 202 546C199 548 197 551 197 554 197 569 213 573 223 564z"/>
  </svg>
  <div class="step step-2">2</div>

  <script>
    // the description is ready to be replaced when the line opens
    const description = document.getElementById("description");
    description.focus();
    description.select();
  </script>
</body>
</html>
```
FILE: styles.css
```css
* {
  box-sizing: border-box;
}
body {
  margin: 0;
  position: relative;
  font-family: Roboto, "Liberation Sans", sans-serif;
  font-size: 12px;
  color: #424242;
  background-color: white;
}
button, input, select, textarea {
  font-family: inherit;
  font-size: 11px;
  margin: 0;
}
button {
  cursor: pointer;
}
.sprite {
  display: none;
}
.icon {
  width: 15px;
  height: 15px;
  fill: currentColor;
  flex: none;
}
.icon.small {
  width: 13px;
  height: 13px;
  vertical-align: -3px;
}
.icon.car, .icon.bill {
  width: 20px;
}
.pos-window {
  min-height: 100vh;
  display: flex;
  flex-direction: column;
}

/* title and tabs */
.title-bar {
  display: flex;
  justify-content: space-between;
  align-items: center;
  height: 34px;
  margin-bottom: 8px;
  padding: 0 6px 0 7px;
}
.title-bar h1 {
  margin: 0;
  font-size: 17px;
  font-weight: normal;
  color: #666;
}
.window-buttons {
  display: flex;
  gap: 10px;
}
.window-buttons button {
  display: flex;
  padding: 0;
  border: none;
  background: none;
  color: #888;
}
.window-buttons .chat {
  width: 20px;
  height: 16px;
}
.thin {
  fill: none;
  stroke: currentColor;
  stroke-width: 1.400;
}
.tabs {
  display: flex;
  margin-left: 7px;
  border-bottom: 1px solid #ddd;
}
.tabs a {
  padding: 0 14px;
  line-height: 40px;
  font-size: 13px;
  color: #607d8b;
  text-decoration: none;
}
.tabs a.active {
  background-color: #03a9f4;
  color: white;
  font-weight: 700;
  border-radius: 3px 3px 0 0;
}

/* form */
main {
  display: flex;
  flex-direction: column;
  flex-grow: 1;
}
.form-grid {
  display: grid;
  grid-template-columns: repeat(24, minmax(0, 1fr));
  gap: 3px 6px;
  align-items: end;
  padding: 2px 4px 2px 10px;
}
.span2 {
  grid-column: span 2;
}
.span3 {
  grid-column: span 3;
}
.span4 {
  grid-column: span 4;
}
label, .label {
  display: block;
  height: 18px;
  line-height: 18px;
  font-size: 11px;
  font-weight: 500;
  color: #222;
  white-space: nowrap;
}
.link-label {
  color: #03a9f4;
}
input, select, textarea {
  display: block;
  width: 100%;
  height: 24px;
  padding: 0 4px;
  border: 1px solid #c2c2c2;
  border-radius: 3px;
  background-color: #fafbfc;
  color: #555;
}
input::placeholder {
  color: #999;
  opacity: 1;
}
.locked {
  background-color: #e6e7eb;
}
.under {
  border-bottom: 2px solid #03a9f4;
}
.right {
  text-align: right;
}
.center {
  text-align: center;
}
.navy {
  color: #337ab7;
}
.red {
  color: #a94442;
}
.wrap {
  position: relative;
}
.clear {
  position: absolute;
  top: 5px;
  right: 3px;
  display: flex;
  padding: 0;
  border: none;
  background: none;
  color: #607d8b;
}
.clear .icon {
  width: 13px;
  height: 13px;
}
.btn {
  display: flex;
  justify-content: center;
  align-items: center;
  height: 24px;
  margin-bottom: 1px;
  padding: 0;
  border: 1px solid #e0e4e8;
  border-radius: 3px;
  background-color: #f7f9fa;
  color: #607d8b;
}
.btn.blue {
  background-color: #03a9f4;
  border-color: #03a9f4;
  color: white;
}
.btn.yellow {
  background-color: #ffc107;
  border-color: #ffc107;
  color: white;
}
.faded .icon {
  opacity: 0.5;
}
.group {
  display: flex;
  gap: 1px;
}
.group .btn {
  flex: 1 1 0;
  min-width: 0;
}
.group .btn.wide {
  flex-grow: 2;
}
.tight .icon {
  width: 14px;
}
.caret {
  position: absolute;
  top: 10px;
  right: 6px;
  border: 4px solid transparent;
  border-top: 5px solid #888;
}
.add-badge {
  position: absolute;
  top: 4px;
  right: 5px;
  display: flex;
  justify-content: center;
  align-items: center;
  width: 16px;
  height: 16px;
  padding: 0;
  border: none;
  border-radius: 50%;
  background-color: #f44336;
  color: white;
}
.add-badge .icon {
  width: 10px;
  height: 10px;
}
.vin {
  overflow: hidden;
  display: flex;
  height: 24px;
  border: 1px solid #c2c2c2;
  border-bottom: 2px solid #03a9f4;
  border-radius: 3px;
  background-color: #fafbfc;
}
.vin input {
  direction: rtl;
  height: 21px;
  margin-left: 3px;
  padding: 0;
  border: none;
  color: #3c763d;
}
.camera {
  flex: none;
  display: flex;
  align-items: center;
  padding: 0 5px 0 4px;
  border: none;
  background: none;
  color: #03a9f4;
}
.carfax-logo {
  display: flex;
  padding: 1px;
  border: 1px solid #222;
  border-radius: 2px;
  gap: 1px;
}
.carfax-logo b {
  width: 15px;
  font-family: Lato, sans-serif;
  font-size: 16px;
  font-weight: 900;
  line-height: 17px;
  text-align: center;
  background-color: #222;
  color: white;
}
.carfax-logo .last {
  background-color: white;
  color: #222;
}
.btn.autoserve {
  border-color: #333;
  background-color: #333;
  color: white;
  font-family: Inter, sans-serif;
  font-size: 11px;
  font-weight: 500;
}
.slashes {
  color: #f57c1f;
  font-weight: 900;
  font-style: italic;
}
.one {
  margin-left: 2px;
  padding: 0 2px;
  border: 1px solid #888;
  border-radius: 2px;
  line-height: 11px;
}

/* items */
.items {
  flex-grow: 1;
  margin-left: 7px;
  padding: 4px 10px 0 0;
  border-top: 1px solid #eee;
}
table {
  width: 100%;
  table-layout: fixed;
  border-collapse: collapse;
  box-shadow: 0 3px 6px #f0f0f0;
}
.c-no { width: 6%; }
.c-item { width: 18%; }
.c-desc { width: 43%; }
.c-qty { width: 9%; }
.c-price { width: 10%; }
.c-disc { width: 6%; }
.c-total { width: 8%; }
th, td {
  height: 25px;
  padding: 0 7px;
  border: 1px solid #e0e4e8;
  text-align: left;
  white-space: nowrap;
}
th {
  height: 26px;
  color: #607d8b;
  font-weight: 700;
}
th.center, td.center {
  text-align: center;
}
.sorted, .star {
  color: #337ab7;
}
.sort {
  font-weight: normal;
}
.selected {
  background-color: #8bc34a;
}
.warn {
  color: #a94442;
  font-weight: 700;
}
.num {
  text-align: right;
}
.qty {
  padding-right: 4px;
  text-align: right;
}

/* legend */
.legend {
  display: flex;
  justify-content: center;
  gap: 2px;
  margin-left: 8px;
  padding: 2px 0 0;
  border: solid #eee;
  border-width: 1px 0;
  font-size: 10px;
  font-style: italic;
  line-height: 18px;
}
.sw {
  display: inline-block;
  width: 10px;
  height: 11px;
  margin-right: 2px;
  border: 1px solid #888;
  vertical-align: -1px;
}
.sky { background-color: #81d4fa; }
.lime { background-color: #c5e1a5; }
.gold { background-color: #ffe082; }
.grey { background-color: #e0e0e0; }
.rose { background-color: #ef9a9a; }

/* line being edited */
.edit-row {
  display: grid;
  grid-template-columns: 103px 155px 70px 1fr 41px 116px 67px 54px 67px 27px 66px;
  column-gap: 7px;
  margin-left: 8px;
  padding: 4px 18px 4px 0;
  border-bottom: 1px solid #eee;
}
.edit-row .btn {
  margin-bottom: 0;
}
.edit-row .right {
  padding-right: 5px;
}
.lookup {
  gap: 4px;
  padding-left: 3px;
}
.focused {
  border: 2px solid #03a9f4;
  outline: none;
}
.focused::selection {
  background-color: #3367d1;
  color: white;
}
.stepper {
  display: flex;
  width: 108px;
  height: 24px;
  border: 1px solid #c2c2c2;
  border-radius: 3px;
  overflow: hidden;
}
.stepper button {
  width: 29px;
  padding: 0;
  border: none;
  background-color: #f5f5f5;
  color: #607d8b;
}
.stepper input {
  flex: 1;
  min-width: 0;
  height: 22px;
  border-width: 0 1px;
  border-radius: 0;
  text-align: center;
}

/* bottom */
.bottom {
  display: grid;
  grid-template-columns: 454fr 454fr 448fr;
  gap: 6px;
  padding: 4px 10px 5px 10px;
}
.tools {
  display: flex;
  flex-direction: column;
  gap: 3px;
}
.tool-row {
  display: flex;
  gap: 1px;
}
.tool, .action {
  display: flex;
  flex-direction: column;
  justify-content: center;
  align-items: center;
  gap: 1px;
  border: 1px solid #dde3e7;
  border-radius: 3px;
  background-color: #f7f9fa;
  color: #607d8b;
  font-size: 10px;
  white-space: nowrap;
}
.tool {
  flex: 1 1 0;
  min-width: 0;
  height: 44px;
  padding: 1px 0 0;
}
.tool .icon, .action .icon {
  height: 18px;
  width: 18px;
}
.tool .icon.car, .action .icon.car, .action .icon.bill {
  width: 20px;
}
.key {
  display: flex;
  align-items: center;
  gap: 3px;
  font-size: 18px;
  font-weight: 700;
  line-height: 18px;
}
.green {
  color: #2d702f;
}
.maroon {
  color: #a94442;
}
.tool.navy {
  color: #337ab7;
}
.filters-logo {
  display: flex;
  align-items: center;
  justify-content: center;
  align-self: stretch;
  height: 20px;
  margin: 0 3px;
  background-color: #00aeda;
  color: white;
  font-family: Lato, sans-serif;
  font-size: 11px;
  font-style: italic;
  font-weight: 900;
}
.filters-logo em {
  color: #f5c24b;
}
.speed {
  width: 9px;
  height: 9px;
  stroke: #f5c24b;
  stroke-width: 1.500;
}
.message {
  display: flex;
  flex-direction: column;
}
.message-head {
  display: flex;
  justify-content: space-between;
  align-items: center;
}
.message-head label {
  font-size: 12px;
  height: 20px;
}
.message-head .btn {
  width: 37px;
  margin: 0;
}
textarea {
  flex-grow: 1;
  height: 70px;
  resize: vertical;
}
.totals {
  display: grid;
  grid-template-columns: 68fr 66fr 74fr 217fr;
  grid-auto-rows: 24px;
  column-gap: 6px;
  align-content: start;
  padding: 16px 0 0 5px;
}
.totals label {
  font-size: 12px;
  line-height: 24px;
  text-align: right;
}
.totals input {
  font-weight: 700;
  text-align: right;
}

/* actions */
.actions {
  display: flex;
  gap: 5px;
  padding: 0 6px 1px 11px;
}
.action {
  flex: 1 0 0;
  height: 40px;
  padding: 1px 1px 0;
}
.action .key {
  color: #337ab7;
}
.key .icon {
  color: #607d8b;
}
.tool .key .icon, .danger .key .icon, .success .key .icon {
  color: inherit;
}
.danger {
  border-color: #f44336;
  background-color: #f44336;
}
.success {
  border-color: #6bb84a;
  background-color: #8bc34a;
}
.danger, .success, .danger .key, .success .key {
  color: white;
}
.action .icon.cross {
  width: 13px;
  height: 13px;
}

/* step markers */
.frame {
  position: absolute;
  border: 3px solid red;
  pointer-events: none;
}
.row-frame {
  left: 7px;
  top: 248px;
  width: 726px;
  height: 29px;
}
.button-frame {
  left: 279px;
  top: 502px;
  width: 41px;
  height: 34px;
}
.arrow {
  position: absolute;
  fill: #ee2c2c;
  pointer-events: none;
}
.chevrons {
  fill: none;
  stroke: #ee2c2c;
  stroke-width: 15;
  stroke-linecap: round;
}
.arrow-1 {
  left: 744px;
  top: 212px;
  width: 180px;
}
.arrow-2 {
  left: 110px;
  top: 469px;
  width: 164px;
}
.step {
  position: absolute;
  display: flex;
  justify-content: center;
  align-items: center;
  width: 90px;
  height: 93px;
  border: 5px solid red;
  border-radius: 50%;
  background-color: white;
  color: black;
  font-family: Inter, "Liberation Sans", sans-serif;
  font-size: 60px;
  font-weight: 800;
}
.step-1 {
  left: 929px;
  top: 220px;
}
.step-2 {
  left: 14px;
  top: 471px;
}
```
